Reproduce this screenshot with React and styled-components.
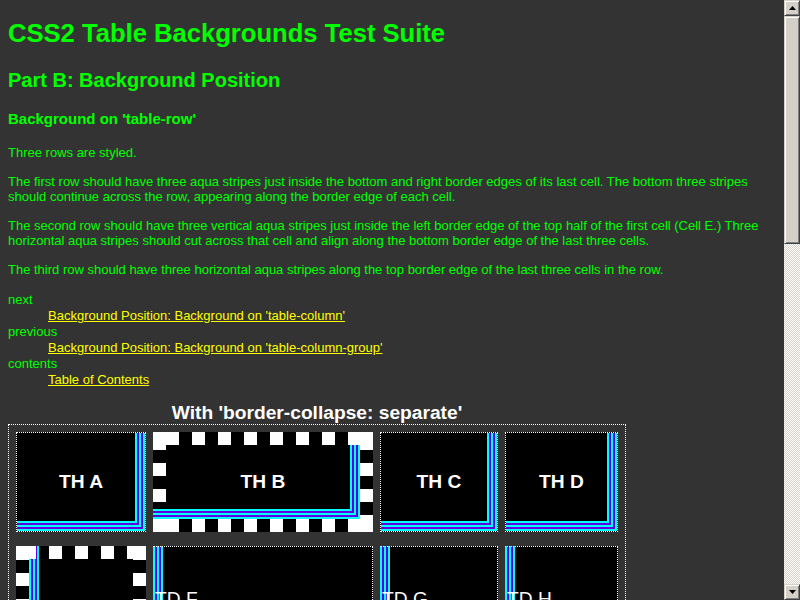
import styled, { createGlobalStyle, css } from "styled-components";

const AQUA = "#00ffff";
const VIOLET = "#6000e0";

const stripes = (dir) =>
  `linear-gradient(${dir}, ${AQUA} 0 2px, ${VIOLET} 2px 4px, ${AQUA} 4px 6px, ${VIOLET} 6px 8px, ${AQUA} 8px 10px)`;

// nested L of stripes along the bottom and right inside edge
const cornerStripes = `
  inset -2px -2px 0 ${AQUA},
  inset -4px -4px 0 ${VIOLET},
  inset -6px -6px 0 ${AQUA},
  inset -8px -8px 0 ${VIOLET},
  inset -10px -10px 0 ${AQUA}
`;

const checkerLayers = (x, y) => [
  { image: "linear-gradient(#fff, #fff)", size: "13px 13px", pos: "0 0", repeat: "no-repeat" },
  { image: "linear-gradient(#fff, #fff)", size: "13px 13px", pos: "100% 0", repeat: "no-repeat" },
  { image: "linear-gradient(#fff, #fff)", size: "13px 13px", pos: "0 100%", repeat: "no-repeat" },
  { image: "linear-gradient(#fff, #fff)", size: "13px 13px", pos: "100% 100%", repeat: "no-repeat" },
  { image: "linear-gradient(to right, #fff 50%, #000 50%)", size: "26px 13px", pos: `${x}px 0`, repeat: "repeat-x" },
  { image: "linear-gradient(to right, #fff 50%, #000 50%)", size: "26px 13px", pos: `${x}px 100%`, repeat: "repeat-x" },
  { image: "linear-gradient(to bottom, #000 50%, #fff 50%)", size: "13px 26px", pos: `0 ${y}px`, repeat: "repeat-y" },
  { image: "linear-gradient(to bottom, #000 50%, #fff 50%)", size: "13px 26px", pos: `100% ${y}px`, repeat: "repeat-y" },
];

const layered = (layers) => css`
  background-color: #000;
  background-image: ${layers.map((l) => l.image).join(", ")};
  background-size: ${layers.map((l) => l.size).join(", ")};
  background-position: ${layers.map((l) => l.pos).join(", ")};
  background-repeat: ${layers.map((l) => l.repeat).join(", ")};
  background-origin: border-box;
`;

const GlobalStyle = createGlobalStyle`
  html, body {
    margin: 0;
    padding: 0;
    overflow: hidden;
    background: #333333;
  }
  body {
    font-family: "Liberation Sans", Arial, sans-serif;
  }
`;

const Viewport = styled.div`
  display: flex;
  width: 800px;
  height: 600px;
  overflow: hidden;
  background: #333333;
`;

const Page = styled.main`
  flex: 1;
  min-width: 0;
  padding: 0 8px;
  overflow: hidden;
  color: #00ff00;
`;

const Title = styled.h1`
  margin: 19px 0 0;
  font-size: 25.6px;
  line-height: 29px;
  font-weight: bold;
`;

const Subtitle = styled.h2`
  margin: 21px 0 0;
  font-size: 20px;
  line-height: 23px;
  font-weight: bold;
`;

const Section = styled.h3`
  margin: 18px 0 0;
  font-size: 15px;
  line-height: 17px;
  font-weight: bold;
`;

const Para = styled.p`
  margin: ${(p) => (p.$first ? "18px" : "14px")} 0 0;
  font-size: 13px;
  line-height: 15px;
`;

const Nav = styled.dl`
  margin: 15px 0 0;
  font-size: 13px;
  line-height: 16px;

  dt {
    margin: 0;
  }

  dd {
    margin: 0 0 0 40px;
  }
`;

const NavLink = styled.a`
  color: #ffff00;
  text-decoration: underline;
`;

const TableBlock = styled.div`
  width: max-content;
  margin-top: 13px;
`;

const Caption = styled.div`
  text-align: center;
  color: #ffffff;
  font-size: 19.2px;
  line-height: 23px;
  font-weight: bold;
`;

const Grid = styled.div`
  display: grid;
  grid-template-columns: 130px 220px 118px 113px;
  column-gap: 7px;
  row-gap: 14px;
  padding: 7px;
  border: 1px dotted #ffffff;
`;

const HeadCell = styled.div`
  box-sizing: border-box;
  height: 100px;
  display: flex;
  align-items: center;
  justify-content: center;
  color: #ffffff;
  font-size: 19.2px;
  font-weight: bold;
  border: 1px dotted #ffffff;
  background: #000;
  box-shadow: ${cornerStripes};
`;

const CheckerHeadCell = styled(HeadCell)`
  border: 13px solid transparent;
  ${(p) => layered(p.$layers)}
`;

const BodyCell = styled.div`
  box-sizing: border-box;
  height: 110px;
  padding: 41px 0 0 1px;
  color: #ffffff;
  font-size: 19.2px;
  line-height: 22px;
  border: 1px dotted #ffffff;
  border-left: 1px solid transparent;
  background-color: #000;
  background-image: ${stripes("to right")};
  background-size: 10px 100%;
  background-repeat: no-repeat;
  background-origin: border-box;
`;

const CheckerBodyCell = styled(BodyCell)`
  border: 13px solid transparent;
  padding: 48px 0 0 1px;
  ${(p) => layered(p.$layers)}
`;

const Scrollbar = styled.div`
  flex: none;
  width: 16px;
  display: flex;
  flex-direction: column;
  background: repeating-conic-gradient(#d4d0c8 0 25%, #ffffff 0 50%) 0 0 / 2px 2px;
`;

const ScrollPart = styled.div`
  box-sizing: border-box;
  height: ${(p) => p.$height}px;
  flex: none;
  display: flex;
  align-items: center;
  justify-content: center;
  background: #d4d0c8;
  border: 1px solid;
  border-color: #d4d0c8 #404040 #404040 #d4d0c8;
  box-shadow: inset 1px 1px 0 #ffffff, inset -1px -1px 0 #808080;
`;

const Track = styled.div`
  flex: 1;
`;

const Arrow = ({ down }) => (
  <svg width="7" height="4" viewBox="0 0 7 4">
    <polygon
      points={down ? "0,0 7,0 3.5,4" : "3.5,0 7,4 0,4"}
      fill="#000"
    />
  </svg>
);

const headBLayers = [
  { image: stripes("to bottom"), size: "13px 10px", pos: "left 0 bottom 13px", repeat: "no-repeat" },
  ...checkerLayers(13, 18),
];

const bodyELayers = [
  { image: stripes("to right"), size: "10px 60px", pos: "13px 13px", repeat: "no-repeat" },
  { image: `linear-gradient(to right, ${VIOLET} 0 1px, ${AQUA} 1px 3px)`, size: "3px 13px", pos: "20px 0", repeat: "no-repeat" },
  ...checkerLayers(7, 14),
];

const App = () => (
  <Viewport>
    <GlobalStyle />
    <Page>
      <Title>CSS2 Table Backgrounds Test Suite</Title>
      <Subtitle>Part B: Background Position</Subtitle>
      <Section>Background on 'table-row'</Section>
      <Para $first>Three rows are styled.</Para>
      <Para>
        The first row should have three aqua stripes just inside the bottom and
        right border edges of its last cell. The bottom three stripes should
        continue across the row, appearing along the border edge of each cell.
      </Para>
      <Para>
        The second row should have three vertical aqua stripes just inside the
        left border edge of the top half of the first cell (Cell E.) Three
        horizontal aqua stripes should cut across that cell and align along the
        bottom border edge of the last three cells.
      </Para>
      <Para>
        The third row should have three horizontal aqua stripes along the top
        border edge of the last three cells in the row.
      </Para>
      <Nav>
        <dt>next</dt>
        <dd>
          <NavLink href="#">Background Position: Background on 'table-column'</NavLink>
        </dd>
        <dt>previous</dt>
        <dd>
          <NavLink href="#">Background Position: Background on 'table-column-group'</NavLink>
        </dd>
        <dt>contents</dt>
        <dd>
          <NavLink href="#">Table of Contents</NavLink>
        </dd>
      </Nav>
      <TableBlock>
        <Caption>With 'border-collapse: separate'</Caption>
        <Grid>
          <HeadCell>TH A</HeadCell>
          <CheckerHeadCell $layers={headBLayers}>TH B</CheckerHeadCell>
          <HeadCell>TH C</HeadCell>
          <HeadCell>TH D</HeadCell>
          <CheckerBodyCell $layers={bodyELayers}>TD E</CheckerBodyCell>
          <BodyCell>TD F</BodyCell>
          <BodyCell>TD G</BodyCell>
          <BodyCell>TD H</BodyCell>
        </Grid>
      </TableBlock>
    </Page>
    <Scrollbar>
      <ScrollPart $height={16}>
        <Arrow />
      </ScrollPart>
      <ScrollPart $height={228} />
      <Track />
      <ScrollPart $height={16}>
        <Arrow down />
      </ScrollPart>
    </Scrollbar>
  </Viewport>
);

export default App;
